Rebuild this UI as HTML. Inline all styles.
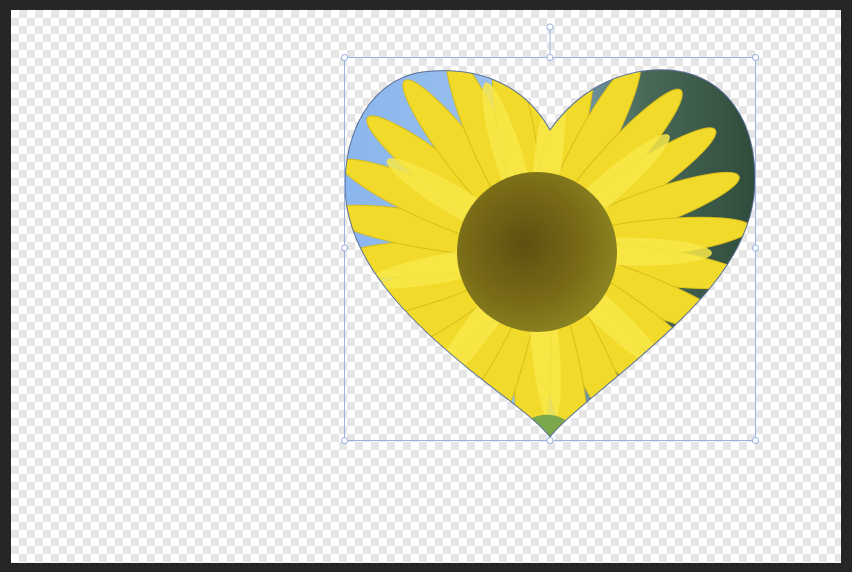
<!DOCTYPE html>
<html><head><style>
html,body{margin:0;padding:0;background:#262626;width:852px;height:572px;overflow:hidden}
#c{position:absolute;left:11px;top:10px;width:830px;height:553px;
background-color:#fff;
background-image:linear-gradient(45deg,#e6e6e6 25%,transparent 25%,transparent 75%,#e6e6e6 75%),linear-gradient(45deg,#e6e6e6 25%,transparent 25%,transparent 75%,#e6e6e6 75%);
background-size:16px 16px;background-position:0 0,8px 8px}
svg{position:absolute;left:0;top:0}
</style></head><body>
<div id="c"></div>
<svg width="852" height="572" viewBox="0 0 852 572">
<defs>
<clipPath id="h"><path id="hp" d="M550,130 C522,80 472,66 422,72 C372,80 345,130 345,185 C345,262 415,325 470,370 C505,398 535,418 550,437 C565,418 600,392 640,357 C700,305 755,250 755,180 C755,115 722,75 670,70 C615,67 575,95 550,130 Z"/></clipPath>
<linearGradient id="bg" x1="0" x2="1" y1="0" y2="0">
<stop offset="0" stop-color="#8ab6ee"/><stop offset="0.45" stop-color="#9cc2ec"/><stop offset="0.72" stop-color="#4a6a58"/><stop offset="1" stop-color="#2e4a3a"/></linearGradient>
<radialGradient id="ctr" cx="0.42" cy="0.45" r="0.6"><stop offset="0" stop-color="#5e5010"/><stop offset="0.6" stop-color="#786a16"/><stop offset="1" stop-color="#8c8422"/></radialGradient>
</defs>
<g clip-path="url(#h)">
<rect x="340" y="60" width="420" height="385" fill="url(#bg)"/>
<g transform="translate(537,250)" fill="#f1da2a" stroke="#d8bd1c" stroke-width="1">
<ellipse rx="18" ry="100" transform="rotate(0) translate(0,-115)"/>
<ellipse rx="18" ry="100" transform="rotate(14) translate(0,-115)"/>
<ellipse rx="18" ry="100" transform="rotate(28) translate(0,-115)"/>
<ellipse rx="18" ry="100" transform="rotate(42) translate(0,-115)"/>
<ellipse rx="18" ry="100" transform="rotate(56) translate(0,-115)"/>
<ellipse rx="18" ry="100" transform="rotate(70) translate(0,-115)"/>
<ellipse rx="18" ry="100" transform="rotate(84) translate(0,-115)"/>
<ellipse rx="18" ry="100" transform="rotate(98) translate(0,-115)"/>
<ellipse rx="18" ry="100" transform="rotate(112) translate(0,-115)"/>
<ellipse rx="18" ry="100" transform="rotate(126) translate(0,-115)"/>
<ellipse rx="18" ry="100" transform="rotate(140) translate(0,-115)"/>
<ellipse rx="18" ry="100" transform="rotate(154) translate(0,-115)"/>
<ellipse rx="18" ry="100" transform="rotate(168) translate(0,-115)"/>
<ellipse rx="18" ry="100" transform="rotate(182) translate(0,-115)"/>
<ellipse rx="18" ry="100" transform="rotate(196) translate(0,-115)"/>
<ellipse rx="18" ry="100" transform="rotate(210) translate(0,-115)"/>
<ellipse rx="18" ry="100" transform="rotate(224) translate(0,-115)"/>
<ellipse rx="18" ry="100" transform="rotate(238) translate(0,-115)"/>
<ellipse rx="18" ry="100" transform="rotate(252) translate(0,-115)"/>
<ellipse rx="18" ry="100" transform="rotate(266) translate(0,-115)"/>
<ellipse rx="18" ry="100" transform="rotate(280) translate(0,-115)"/>
<ellipse rx="18" ry="100" transform="rotate(294) translate(0,-115)"/>
<ellipse rx="18" ry="100" transform="rotate(308) translate(0,-115)"/>
<ellipse rx="18" ry="100" transform="rotate(322) translate(0,-115)"/>
<ellipse rx="18" ry="100" transform="rotate(336) translate(0,-115)"/>
<ellipse rx="18" ry="100" transform="rotate(350) translate(0,-115)"/>
</g>
<g transform="translate(537,250)" fill="#f8e848" opacity="0.85">
<ellipse rx="14" ry="80" transform="rotate(7) translate(0,-95)"/>
<ellipse rx="14" ry="80" transform="rotate(49) translate(0,-95)"/>
<ellipse rx="14" ry="80" transform="rotate(91) translate(0,-95)"/>
<ellipse rx="14" ry="80" transform="rotate(133) translate(0,-95)"/>
<ellipse rx="14" ry="80" transform="rotate(175) translate(0,-95)"/>
<ellipse rx="14" ry="80" transform="rotate(217) translate(0,-95)"/>
<ellipse rx="14" ry="80" transform="rotate(259) translate(0,-95)"/>
<ellipse rx="14" ry="80" transform="rotate(301) translate(0,-95)"/>
<ellipse rx="14" ry="80" transform="rotate(343) translate(0,-95)"/>
</g>
<circle cx="537" cy="252" r="80" fill="url(#ctr)"/>
<path d="M520,425 C540,410 560,412 575,428 L550,440 Z" fill="#7aa84a"/>
</g>
<use href="#hp" fill="none" stroke="#5a6f98" stroke-width="1"/>
<g stroke="#9bb3df" stroke-width="1" fill="none">
<rect x="344.5" y="57.5" width="411" height="383"/>
<line x1="550" y1="28" x2="550" y2="57"/>
</g>
<g fill="#fff" stroke="#9bb3df" stroke-width="1">
<circle cx="550" cy="27" r="3"/><circle cx="344.5" cy="57.5" r="3"/><circle cx="550" cy="57.5" r="3"/><circle cx="755.5" cy="57.5" r="3"/>
<circle cx="344.5" cy="248" r="3"/><circle cx="755.5" cy="248" r="3"/>
<circle cx="344.5" cy="440.5" r="3"/><circle cx="550" cy="440.5" r="3"/><circle cx="755.5" cy="440.5" r="3"/>
</g>
</svg>
</body></html>
